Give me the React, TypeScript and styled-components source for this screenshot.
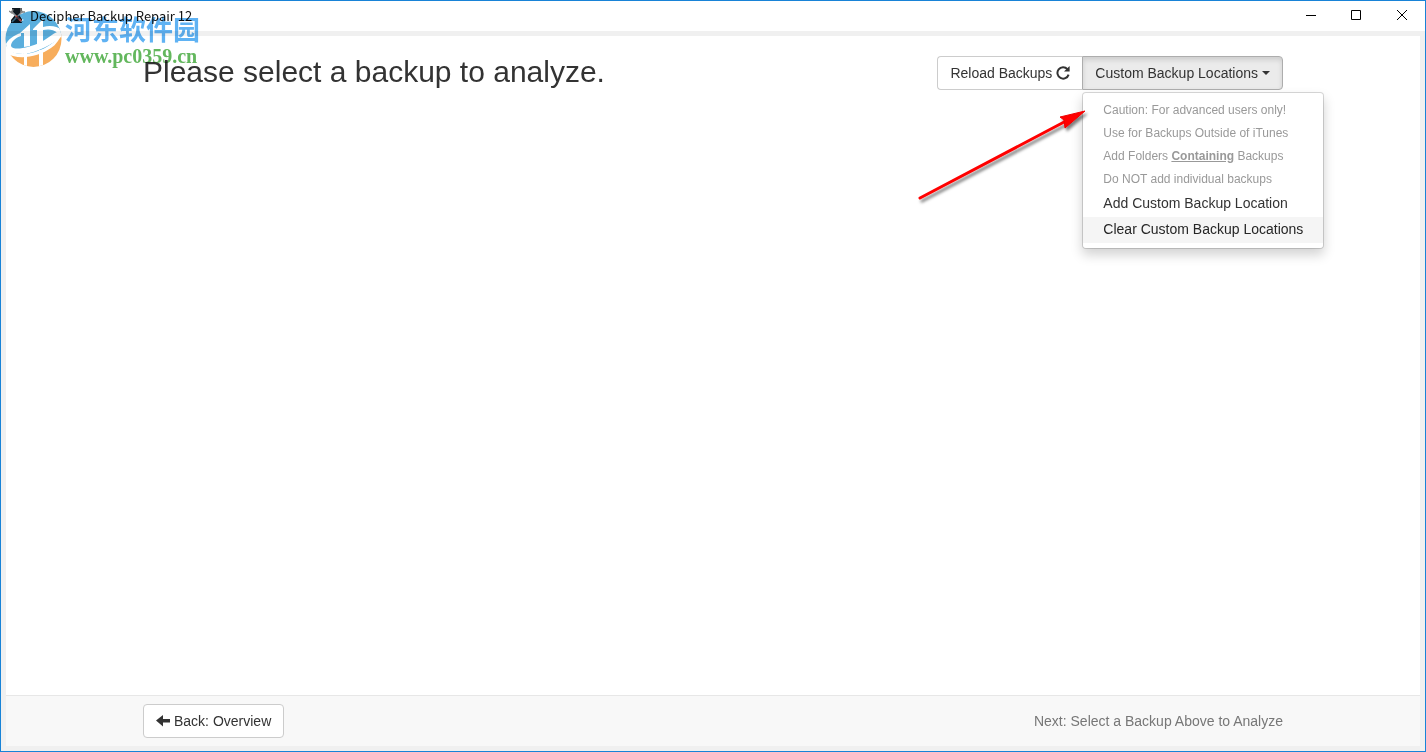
import React from "react";
import styled, { createGlobalStyle } from "styled-components";

const GlobalStyle = createGlobalStyle`
  * { box-sizing: border-box; }
  body {
    margin: 0;
    font-family: "Liberation Sans", Arial, sans-serif;
    font-size: 14px;
    line-height: 20px;
    color: #333;
    background: #fff;
  }
`;

const Window = styled.div`
  position: relative;
  display: flex;
  flex-direction: column;
  min-height: 100vh;
  border: 1px solid #1883d7;
  background: #fff;
`;

const TitleBar = styled.header`
  display: flex;
  align-items: center;
  height: 30px;
  padding-left: 8px;
`;

const AppTitle = styled.span`
  flex: 1;
  padding-left: 5px;
  font-family: "Noto Sans CJK SC", "Noto Sans", sans-serif;
  font-size: 13px;
  color: #111;
`;

const WindowButton = styled.button`
  display: flex;
  align-items: center;
  justify-content: center;
  width: 46px;
  height: 30px;
  padding: 0;
  border: 0;
  background: transparent;
`;

const Frame = styled.div`
  flex: 1;
  display: flex;
  flex-direction: column;
  border: 5px solid #f0f0f0;
`;

const Container = styled.div`
  display: flex;
  justify-content: space-between;
  width: 100%;
  max-width: 1170px;
  margin: 0 auto;
  padding: 0 15px;
`;

const Main = styled.main`
  flex: 1;
  padding-top: 20px;
`;

const Heading = styled.h2`
  margin: 0;
  font-size: 30px;
  line-height: 32px;
  font-weight: 400;
`;

const ButtonGroup = styled.div`
  display: flex;
  align-items: flex-start;
`;

const Button = styled.button<{ $side?: "left" | "right"; $active?: boolean }>`
  display: flex;
  align-items: center;
  gap: 4px;
  height: 34px;
  padding: 0 12px;
  font: inherit;
  color: #333;
  white-space: nowrap;
  background: ${(p) => (p.$active ? "#ebebeb" : "#fff")};
  border: 1px solid ${(p) => (p.$active ? "#adadad" : "#ccc")};
  border-right-width: ${(p) => (p.$side === "left" ? 0 : "1px")};
  border-radius: ${(p) =>
    p.$side === "left" ? "4px 0 0 4px" : p.$side === "right" ? "0 4px 4px 0" : "4px"};
  box-shadow: ${(p) => (p.$active ? "inset 0 3px 5px rgba(0, 0, 0, 0.125)" : "none")};
`;

const Caret = styled.span`
  border-top: 4px solid #333;
  border-left: 4px solid transparent;
  border-right: 4px solid transparent;
`;

const Dropdown = styled.div`
  position: relative;
`;

const Menu = styled.ul`
  position: absolute;
  top: 100%;
  left: 0;
  margin: 2px 0 0;
  padding: 6px 0 5px;
  list-style: none;
  white-space: nowrap;
  background: #fff;
  border: 1px solid rgba(0, 0, 0, 0.15);
  border-radius: 4px;
  background-clip: padding-box;
  box-shadow: 0 6px 12px rgba(0, 0, 0, 0.175);
`;

const MenuNote = styled.li`
  padding: 3px 20px;
  font-size: 12px;
  line-height: 17px;
  color: #999;
`;

const Emphasis = styled.u`
  font-weight: 700;
`;

const MenuItem = styled.button<{ $highlighted?: boolean }>`
  display: block;
  width: 100%;
  padding: 2px 20px 4px;
  border: 0;
  font: inherit;
  text-align: left;
  color: ${(p) => (p.$highlighted ? "#262626" : "#333")};
  background: ${(p) => (p.$highlighted ? "#f5f5f5" : "transparent")};
`;

const Arrow = styled.svg`
  position: absolute;
  top: 44px;
  left: -172px;
  pointer-events: none;
`;

const Footer = styled.footer`
  padding: 8px 0;
  border-top: 1px solid #e7e7e7;
  background: #f8f8f8;
`;

const NextHint = styled.span`
  line-height: 34px;
  color: #777;
`;

const Watermark = styled.div`
  position: absolute;
  top: 7px;
  left: 4px;
  display: flex;
  gap: 2px;
  mix-blend-mode: multiply;
  pointer-events: none;
`;

const WatermarkText = styled.div`
  display: flex;
  flex-direction: column;
  padding-top: 7px;
`;

const SiteName = styled.span`
  font-family: "Noto Sans CJK SC", sans-serif;
  font-size: 27px;
  line-height: 28px;
  font-weight: 700;
  color: #5fb2f3;
`;

const SiteUrl = styled.span`
  font-family: "Liberation Serif", serif;
  font-size: 20px;
  line-height: 26px;
  font-weight: 700;
  color: #63b75d;
`;

const AppIcon = () => (
  <svg width="16" height="16" viewBox="0 0 16 16" aria-hidden="true">
    <path d="M3 0H13V3L10 7L13 11V15H2V12L6 7L3 3Z" fill="#10181f" />
    <path d="M2 3L13 14" stroke="#8d8f92" strokeWidth="1.6" />
    <path d="M14 3L3 14" stroke="#8d9499" strokeWidth="1.4" />
    <path d="M7 8L12 13" stroke="#d0453b" strokeWidth="2" />
    <path d="M12 0V4H16M0 3L3 5L4 1" stroke="#858585" strokeWidth="1.4" fill="none" />
  </svg>
);

const SiteLogo = () => (
  <svg width="58" height="60" viewBox="0 0 58 60" aria-hidden="true">
    <defs>
      <clipPath id="disc"><circle cx="28.5" cy="31" r="28" /></clipPath>
    </defs>
    <g clipPath="url(#disc)">
      <path d="M0 0H58V26C46 38 34 45 18 46C10 46 3 43 0 36Z" fill="#5aaedd" />
      <path d="M0 38C7 51 28 50 42 40C50 34 55 28 58 20V60H0Z" fill="#fff" />
      <path d="M0 45C12 52 32 50 46 40C52 36 56 29 58 23V60H0Z" fill="#f7ad5c" />
      <path d="M15 25L25 16V38L19 39V25Z" fill="#fff" />
      <path d="M28 21L38 11V34L32 37V22H28Z" fill="#fff" />
      <path d="M0 38C3 31 9 27 16 25V28C10 30 6 34 6 38C8 43 24 40 36 34C44 30 50 23 58 22V27C48 36 34 44 18 46C8 46 2 43 0 38Z" fill="#fff" />
      <path d="M38 19C45 17 52 18 57 22L53 25C48 21 43 21 38 22Z" fill="#fff" />
      <path d="M19 45H22V60H19ZM34 42H38V60H34Z" fill="#fff" />
      <path d="M16 9L17 11L19 12L17 13L16 15L15 13L13 12L15 11Z" fill="#d9effa" />
    </g>
  </svg>
);

const ReloadIcon = () => (
  <svg width="14" height="14" viewBox="0 0 14 14" aria-hidden="true">
    <path d="M11.4 3.1A5.7 5.7 0 1 0 12.6 8.6" fill="none" stroke="#333" strokeWidth="2" />
    <path d="M13.6 0V5.6H8Z" fill="#333" />
  </svg>
);

const BackIcon = () => (
  <svg width="14" height="12" viewBox="0 0 14 12" aria-hidden="true">
    <path d="M0 5.5L7 0V4H14V7.5H7V11.5Z" fill="#333" />
  </svg>
);

const WindowGlyph = ({ d }: { d: string }) => (
  <svg width="12" height="12" viewBox="0 0 12 12" aria-hidden="true">
    <path d={d} fill="none" stroke="#000" />
  </svg>
);

const notes: React.ReactNode[] = [
  "Caution: For advanced users only!",
  "Use for Backups Outside of iTunes",
  <>Add Folders <Emphasis>Containing</Emphasis> Backups</>,
  "Do NOT add individual backups",
];

export default function App() {
  return (
    <>
      <GlobalStyle />
      <Window>
        <TitleBar>
          <AppIcon />
          <AppTitle>Decipher Backup Repair 12</AppTitle>
          <WindowButton aria-label="Minimize"><WindowGlyph d="M2 5.5H12" /></WindowButton>
          <WindowButton aria-label="Maximize"><WindowGlyph d="M1.5 .5H10.5V9.5H1.5Z" /></WindowButton>
          <WindowButton aria-label="Close"><WindowGlyph d="M1 0L11 10M11 0L1 10" /></WindowButton>
        </TitleBar>
        <Frame>
          <Main>
            <Container>
              <Heading>Please select a backup to analyze.</Heading>
              <ButtonGroup>
                <Button $side="left">Reload Backups <ReloadIcon /></Button>
                <Dropdown>
                  <Button $side="right" $active aria-expanded="true">
                    Custom Backup Locations <Caret />
                  </Button>
                  <Menu>
                    {notes.map((note, i) => <MenuNote key={i}>{note}</MenuNote>)}
                    <li><MenuItem>Add Custom Backup Location</MenuItem></li>
                    <li><MenuItem $highlighted>Clear Custom Backup Locations</MenuItem></li>
                  </Menu>
                  <Arrow width="184" height="110" viewBox="0 0 184 110" aria-hidden="true">
                    <defs>
                      <filter id="arrowShadow" x="-10%" y="-10%" width="120%" height="130%">
                        <feDropShadow dx="2" dy="3" stdDeviation="1.5" floodColor="#000" floodOpacity="0.5" />
                      </filter>
                    </defs>
                    <g filter="url(#arrowShadow)" fill="#f00">
                      <path d="M10 98L156 21" stroke="#f00" strokeWidth="3" strokeLinecap="round" />
                      <path d="M175 11L150 17L154 20L155 28Z" stroke="#e00" strokeWidth="1" />
                    </g>
                  </Arrow>
                </Dropdown>
              </ButtonGroup>
            </Container>
          </Main>
          <Footer>
            <Container>
              <Button><BackIcon /> Back: Overview</Button>
              <NextHint>Next: Select a Backup Above to Analyze</NextHint>
            </Container>
          </Footer>
        </Frame>
        <Watermark>
          <SiteLogo />
          <WatermarkText>
            <SiteName lang="zh">河东软件园</SiteName>
            <SiteUrl>www.pc0359.cn</SiteUrl>
          </WatermarkText>
        </Watermark>
      </Window>
    </>
  );
}
